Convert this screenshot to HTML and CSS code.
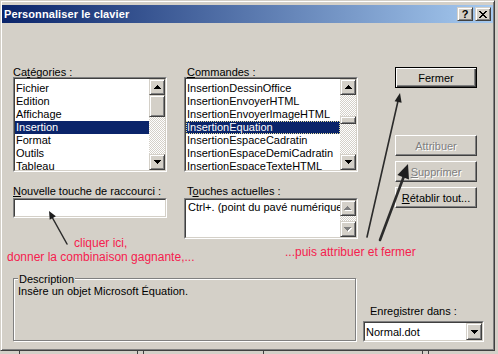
FILE: index.html
```html
<!DOCTYPE html>
<html lang="fr">
<head>
    <meta charset="UTF-8">
    <title>Personnaliser le clavier</title>
    <link rel="stylesheet" href="styles.css">
</head>
<body>
    <div class="window">
        <div class="titlebar">
            <span class="title">Personnaliser le clavier</span>
            <div class="cap-buttons">
                <div class="cap-btn raised"><span class="help">?</span></div>
                <div class="cap-btn raised">
                    <svg width="8" height="7" viewBox="0 0 8 7" shape-rendering="crispEdges">
                        <path d="M0 0h2v1h1v1h2V1h1V0h2v1H7v1H6v1H5v1h1v1h1v1h1v1H6V6H5V5H3v1H2v1H0V6h1V5h1V4h1V3H2V2H1V1H0z"/>
                    </svg>
                </div>
            </div>
        </div>

        <div class="content">
            <div class="top">
                <div class="col col-cat">
                    <div class="lbl">Ca<u>t</u>égories :</div>
                    <div class="sunken list">
                        <div class="sunken-in list-in">
                            <ul class="items">
                                <li>Fichier</li>
                                <li>Edition</li>
                                <li>Affichage</li>
                                <li class="selected">Insertion</li>
                                <li>Format</li>
                                <li>Outils</li>
                                <li>Tableau</li>
                            </ul>
                            <div class="vscroll">
                                <div class="sb-btn raised">
                                    <svg width="7" height="4" shape-rendering="crispEdges"><path d="M3 0h1v1h1v1h1v1h1v1H0V3h1V2h1V1h1z"/></svg>
                                </div>
                                <div class="thumb raised thumb-big"></div>
                                <div class="track"></div>
                                <div class="sb-btn raised">
                                    <svg width="7" height="4" shape-rendering="crispEdges"><path d="M0 0h7v1H6v1H5v1H4v1H3V3H2V2H1V1H0z"/></svg>
                                </div>
                            </div>
                        </div>
                    </div>
                    <div class="lbl lbl-second"><u>N</u>ouvelle touche de raccourci :</div>
                    <div class="sunken field">
                        <div class="sunken-in field-in"></div>
                    </div>
                </div>

                <div class="col col-cmd">
                    <div class="lbl lbl-cmd"><u>C</u>ommandes :</div>
                    <div class="sunken list">
                        <div class="sunken-in list-in">
                            <ul class="items">
                                <li>InsertionDessinOffice</li>
                                <li>InsertionEnvoyerHTML</li>
                                <li>InsertionEnvoyerImageHTML</li>
                                <li class="selected focused">InsertionEquation</li>
                                <li>InsertionEspaceCadratin</li>
                                <li>InsertionEspaceDemiCadratin</li>
                                <li>InsertionEspaceTexteHTML</li>
                            </ul>
                            <div class="vscroll">
                                <div class="sb-btn raised">
                                    <svg width="7" height="4" shape-rendering="crispEdges"><path d="M3 0h1v1h1v1h1v1h1v1H0V3h1V2h1V1h1z"/></svg>
                                </div>
                                <div class="track track-top"></div>
                                <div class="thumb raised thumb-small"></div>
                                <div class="track"></div>
                                <div class="sb-btn raised">
                                    <svg width="7" height="4" shape-rendering="crispEdges"><path d="M0 0h7v1H6v1H5v1H4v1H3V3H2V2H1V1H0z"/></svg>
                                </div>
                            </div>
                        </div>
                    </div>
                    <div class="lbl lbl-second lbl-cmd">T<u>o</u>uches actuelles :</div>
                    <div class="sunken keys">
                        <div class="sunken-in keys-in">
                            <div class="keys-text">Ctrl+. (point du pavé numérique)</div>
                            <div class="vscroll">
                                <div class="sb-btn raised">
                                    <svg width="8" height="5" shape-rendering="crispEdges">
                                        <path fill="#fff" transform="translate(1 1)" d="M3 0h1v1h1v1h1v1h1v1H0V3h1V2h1V1h1z"/>
                                        <path fill="#808080" d="M3 0h1v1h1v1h1v1h1v1H0V3h1V2h1V1h1z"/>
                                    </svg>
                                </div>
                                <div class="track"></div>
                                <div class="sb-btn raised">
                                    <svg width="8" height="5" shape-rendering="crispEdges">
                                        <path fill="#fff" transform="translate(1 1)" d="M0 0h7v1H6v1H5v1H4v1H3V3H2V2H1V1H0z"/>
                                        <path fill="#808080" d="M0 0h7v1H6v1H5v1H4v1H3V3H2V2H1V1H0z"/>
                                    </svg>
                                </div>
                            </div>
                        </div>
                    </div>
                </div>

                <div class="col col-btn">
                    <div class="btn btn-default">Fermer</div>
                    <div class="btn disabled btn-gap">Attribuer</div>
                    <div class="btn disabled"><u>S</u>upprimer</div>
                    <div class="btn"><u>R</u>établir tout...</div>
                </div>
            </div>

            <div class="bottom">
                <div class="groupbox">
                    <div class="group-title">Description</div>
                    <div class="group-text">Insère un objet Microsoft Équation.</div>
                </div>
                <div class="save">
                    <div class="save-lbl">Enre<u>g</u>istrer dans :</div>
                    <div class="sunken combo">
                        <div class="sunken-in combo-in">
                            <span class="combo-text">Normal.dot</span>
                            <div class="combo-btn raised">
                                <svg width="7" height="4" shape-rendering="crispEdges"><path d="M0 0h7v1H6v1H5v1H4v1H3V3H2V2H1V1H0z"/></svg>
                            </div>
                        </div>
                    </div>
                </div>
            </div>
        </div>

        <!-- annotations drawn over the dialog -->
        <div class="note note-left">
            <div class="note-first">cliquer ici,</div>
            <div>donner la combinaison gagnante,...</div>
        </div>
        <div class="note note-right">...puis attribuer et fermer</div>

        <svg class="arrows" width="498" height="354">
            <g stroke="#2b2b2b" fill="none" stroke-linecap="round">
                <line x1="67" y1="244" x2="52" y2="217" stroke-width="1.5"/>
                <line x1="367" y1="237" x2="398" y2="101" stroke-width="1.6"/>
                <line x1="380" y1="240" x2="404" y2="176" stroke-width="2.6"/>
            </g>
            <g fill="#1e1e1e">
                <polygon points="49,211 55.9,216.3 49.7,219.7"/>
                <polygon points="400,93 401.6,102.8 394.6,101.2"/>
                <polygon points="408,164 409,179.5 397.4,175"/>
            </g>
        </svg>
    </div>

    <div class="below">
        <div class="seg" style="width:19px"></div>
        <div class="seg" style="width:118px"></div>
        <div class="seg" style="width:6px"></div>
        <div class="seg" style="width:120px"></div>
        <div class="seg" style="width:159px"></div>
        <div class="seg" style="width:6px"></div>
        <div class="seg" style="width:70px"></div>
    </div>
</body>
</html>
```

FILE: styles.css
```css
* {
    margin: 0;
    padding: 0;
    box-sizing: border-box;
}

body {
    width: 498px;
    height: 354px;
    overflow: hidden;
    background: #d4d0c8;
    font-family: "Liberation Sans", Arial, sans-serif;
    font-size: 11px;
    color: #000;
}

u {
    text-decoration-thickness: 1px;
    text-underline-offset: 1px;
}

.window {
    position: relative;
    width: 495px;
    height: 351px;
    border: 1px solid;
    border-color: #d4d0c8 #404040 #404040 #d4d0c8;
    box-shadow: inset 1px 1px #fff, inset -1px -1px #808080;
    padding: 4px 1px 0;
}

.raised {
    background: #d4d0c8;
    border: 1px solid;
    border-color: #d4d0c8 #404040 #404040 #d4d0c8;
    box-shadow: inset 1px 1px #fff, inset -1px -1px #808080;
}

.sunken {
    border: 1px solid;
    border-color: #808080 #fff #fff #808080;
}

.sunken-in {
    border: 1px solid;
    border-color: #404040 #d4d0c8 #d4d0c8 #404040;
    background: #fff;
}

/* title bar */
.titlebar {
    height: 18px;
    display: flex;
    align-items: center;
    justify-content: space-between;
    padding: 0 2px 0 2px;
    background: linear-gradient(to right, #0a246a, #a6caf0);
}

.title {
    color: #fff;
    font-weight: bold;
    font-size: 11px;
    letter-spacing: 0.1px;
}

.cap-buttons {
    display: flex;
    gap: 2px;
}

.cap-btn {
    width: 16px;
    height: 14px;
    display: flex;
    align-items: center;
    justify-content: center;
}

.help {
    font-weight: bold;
    font-size: 11px;
    line-height: 11px;
}

/* dialog content */
.content {
    padding-left: 11px;
}

.top {
    display: flex;
    padding-top: 42px;
}

.col-cat {
    width: 154px;
}

.col-cmd {
    width: 174px;
    margin-left: 17px;
}

.col-btn {
    width: 82px;
    margin-left: 37px;
    padding-top: 2px;
}

.lbl {
    height: 12px;
    line-height: 14px;
    white-space: nowrap;
}

.lbl-cmd {
    padding-left: 3px;
}

.lbl-second {
    margin-top: 12px;
    margin-bottom: 2px;
}

.list {
    height: 95px;
}

.list-in {
    height: 100%;
    display: flex;
    overflow: hidden;
}

.items {
    list-style: none;
    flex: 1;
    padding-top: 3px;
    overflow: hidden;
}

.items li {
    height: 13px;
    line-height: 13px;
    padding-left: 1px;
    white-space: nowrap;
}

.items .selected {
    background: #0a246a;
    color: #fff;
}

.items .focused {
    outline: 1px dotted #e8e0a0;
    outline-offset: -1px;
}

.vscroll {
    width: 16px;
    flex: none;
    display: flex;
    flex-direction: column;
    background: repeating-conic-gradient(#fff 0 25%, #d4d0c8 0 50%) 0 0 / 2px 2px;
}

.sb-btn {
    height: 16px;
    flex: none;
    display: flex;
    align-items: center;
    justify-content: center;
}

.track {
    flex: 1;
}

.track-top {
    flex: none;
    height: 21px;
}

.thumb {
    flex: none;
}

.thumb-big {
    height: 22px;
}

.thumb-small {
    height: 8px;
}

.field {
    height: 20px;
}

.field-in {
    height: 100%;
}

.keys {
    height: 41px;
}

.keys-in {
    height: 100%;
    display: flex;
    overflow: hidden;
}

.keys-text {
    flex: 1;
    overflow: hidden;
    white-space: nowrap;
    line-height: 13px;
    padding: 1px 0 0 2px;
}

.keys .vscroll {
    background: repeating-conic-gradient(#fff 0 25%, #d4d0c8 0 50%) 0 0 / 2px 2px;
}

/* buttons */
.btn {
    height: 21px;
    display: flex;
    align-items: center;
    justify-content: center;
    background: #d4d0c8;
    border: 1px solid;
    border-color: #fff #404040 #404040 #fff;
    box-shadow: inset -1px -1px #808080;
    margin-bottom: 5px;
    white-space: nowrap;
}

.btn-default {
    border-color: #000;
    box-shadow: inset 1px 1px #fff, inset -1px -1px #404040, inset -2px -2px #808080;
}

.btn-gap {
    margin-top: 47px;
}

.disabled {
    color: #808080;
    text-shadow: 1px 1px #fff;
}

/* bottom row */
.bottom {
    display: flex;
    margin-top: 39px;
}

.groupbox {
    width: 343px;
    height: 63px;
    border: 1px solid #808080;
    box-shadow: 1px 1px #fff, inset 1px 1px #fff;
    padding: 0 4px;
}

.group-title {
    width: fit-content;
    margin-top: -6px;
    padding: 0 1px;
    line-height: 13px;
    background: #d4d0c8;
}

.group-text {
    line-height: 13px;
    margin-top: -1px;
}

.save {
    width: 121px;
    margin-left: 7px;
    padding-top: 27px;
}

.save-lbl {
    height: 16px;
    line-height: 13px;
    padding-left: 7px;
}

.combo {
    height: 21px;
}

.combo-in {
    height: 100%;
    display: flex;
    align-items: center;
}

.combo-text {
    flex: 1;
    padding-left: 1px;
}

.combo-btn {
    width: 16px;
    height: 17px;
    display: flex;
    align-items: center;
    justify-content: center;
}

/* red annotations and arrows */
.note {
    position: absolute;
    color: #f5204e;
    font-size: 12px;
    line-height: 14px;
    white-space: nowrap;
}

.note-left {
    left: 6px;
    top: 235px;
}

.note-first {
    padding-left: 67px;
}

.note-right {
    left: 284px;
    top: 244px;
}

.arrows {
    position: absolute;
    left: -1px;
    top: -1px;
    pointer-events: none;
}

.below {
    display: flex;
    height: 3px;
    background: #d4d0c8;
}

.seg + .seg {
    border-left: 1px solid #404040;
}
```
